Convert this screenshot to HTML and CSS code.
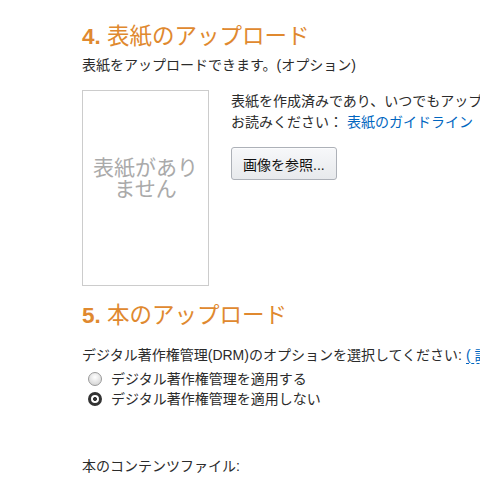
FILE: index.html
```html
<!doctype html>
<html lang="ja">
<head>
    <meta charset="UTF-8" />
    <meta name="viewport" content="width=device-width, initial-scale=1.0" />
    <title>本の詳細</title>
    <link rel="stylesheet" href="styles.css">
</head>
<body>
    <div class="page">
        <section class="step">
            <h2 class="step-title"><span class="num">4.</span> 表紙のアップロード</h2>
            <p class="note">表紙をアップロードできます。(オプション)</p>
            <div class="cover-row">
                <div class="cover-box">
                    <span>表紙があり<br>ません</span>
                </div>
                <div class="cover-info">
                    <p>表紙を作成済みであり、いつでもアップロードできる場合は、以下のガイドラインを</p>
                    <p>お読みください： <a href="#">表紙のガイドライン</a></p>
                    <button class="browse">画像を参照...</button>
                </div>
            </div>
        </section>

        <section class="step">
            <h2 class="step-title"><span class="num">5.</span> 本のアップロード</h2>
            <p class="note drm">デジタル著作権管理(DRM)のオプションを選択してください: <a href="#" class="help">( 詳細 )</a></p>
            <label class="radio"><span class="dot"></span>デジタル著作権管理を適用する</label>
            <label class="radio"><span class="dot checked"></span>デジタル著作権管理を適用しない</label>
            <p class="note content-file">本のコンテンツファイル:</p>
        </section>
    </div>
</body>
</html>
```

FILE: styles.css
```css
body {
    margin: 0;
    font-family: "Liberation Sans", "Noto Sans CJK JP", sans-serif;
    color: #2b2b2b;
    background-color: #fff;
    overflow: hidden;
}

.page {
    padding: 23px 0 0 82px;
    white-space: nowrap;
}

.step-title {
    margin: 0;
    font-size: 22.5px;
    line-height: 28px;
    font-weight: normal;
    color: #e0892f;
}

.num {
    font-weight: bold;
}

.note {
    margin: 4px 0 0;
    font-size: 14px;
    line-height: 20px;
}

.cover-row {
    display: flex;
    gap: 22px;
    margin-top: 15px;
}

.cover-box {
    flex-shrink: 0;
    width: 125px;
    height: 194px;
    border: 1px solid #ccc;
    display: flex;
    justify-content: center;
    text-align: center;
    color: #aaa;
    font-size: 21px;
    line-height: 21px;
}

.cover-box span {
    margin-top: 66px;
}

.cover-info p {
    margin: 0;
    font-size: 14px;
    line-height: 21px;
}

.cover-info p:first-child {
    margin-top: 1px;
}

a {
    color: #0066c0;
    text-decoration: none;
}

.browse {
    margin-top: 14px;
    height: 33px;
    padding: 0 11px;
    font-family: inherit;
    font-size: 14px;
    color: #111;
    background: linear-gradient(#f7f8fa, #e7e9ec);
    border: 1px solid #adb1b8;
    border-radius: 3px;
    box-shadow: 0 1px 0 rgba(255, 255, 255, 0.6) inset;
}

.step + .step {
    margin-top: 16px;
}

.drm {
    margin-top: 15px;
}

.help {
    border-bottom: 1px dashed #0066c0;
}

.radio {
    display: flex;
    align-items: center;
    gap: 9px;
    font-size: 14px;
    line-height: 20px;
    padding-left: 6px;
}

.drm + .radio {
    margin-top: 4px;
}

.dot {
    width: 12px;
    height: 12px;
    border-radius: 50%;
    border: 1px solid #999;
    background: radial-gradient(circle at 50% 35%, #fff, #ccc);
}

.dot.checked {
    width: 8px;
    height: 8px;
    border: 3px solid #333;
    background: radial-gradient(circle, #333 30%, #fff 40%);
}

.content-file {
    margin-top: 47px;
}
```
